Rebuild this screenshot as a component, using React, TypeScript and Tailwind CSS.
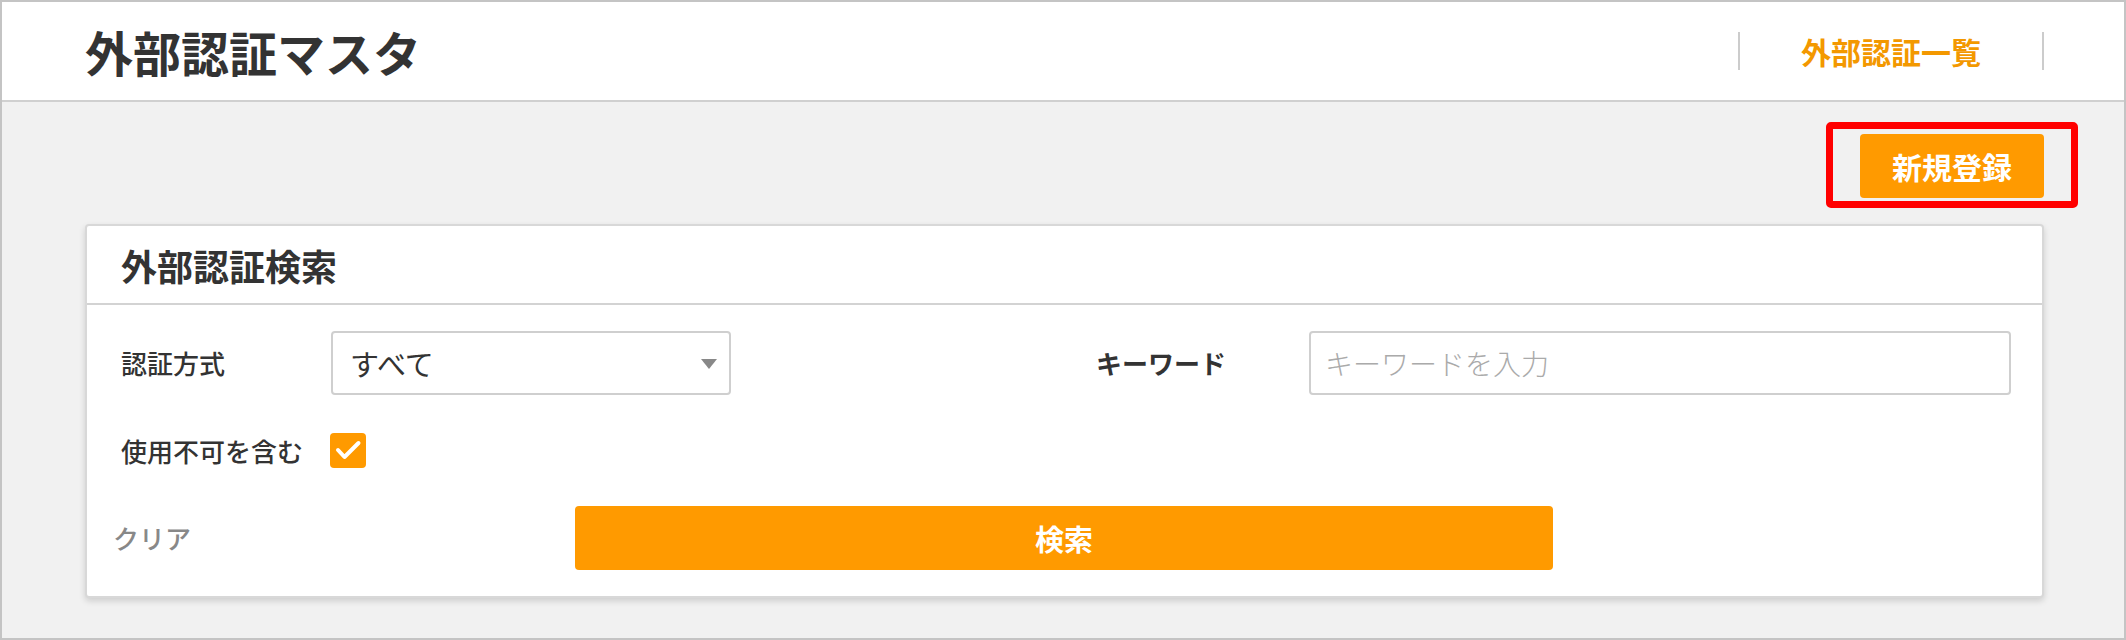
const font = "font-['Noto_Sans_CJK_JP','Noto_Sans',sans-serif]";

function CheckBox() {
  return (
    <span className="flex h-[35px] w-[36px] items-center justify-center rounded-[4px] bg-[#ff9a00]">
      <svg width="36" height="35" viewBox="0 0 36 35" fill="none">
        <path d="M8 17l6.5 7L28.5 10" stroke="#fff" strokeWidth="4" strokeLinecap="round" strokeLinejoin="round" />
      </svg>
    </span>
  );
}

export default function App() {
  return (
    <div className={`${font} flex h-[640px] w-[2126px] flex-col border-2 border-[#c4c4c4] bg-[#f1f1f1] text-[#333]`}>
      <header className="flex h-[100px] shrink-0 items-center justify-between border-b-2 border-[#d0d0d0] bg-white pl-[83px] pr-[80px]">
        <h1 className="text-[48px] font-bold leading-none">外部認証マスタ</h1>
        <nav className="flex h-[38px] w-[306px] items-center justify-center border-x-2 border-[#cccccc] text-[30px] font-bold leading-none text-[#f39800]">
          外部認証一覧
        </nav>
      </header>

      <main className="pl-[83px] pr-[80px]">
        <div className="mt-[32px] flex justify-end">
          <div className="relative">
            <button className="flex h-[64px] w-[184px] items-center justify-center rounded-[4px] bg-[#ff9a00] text-[30px] font-bold leading-none text-white">
              新規登録
            </button>
            {/* red annotation frame drawn over the button */}
            <span className="pointer-events-none absolute -bottom-[10px] -left-[34px] -right-[34px] -top-[12px] rounded-[5px] border-[7px] border-[#ff0000]" />
          </div>
        </div>

        <section className="mt-[26px] rounded-[4px] border-2 border-[#d8d8d8] bg-white shadow-[0_3px_6px_rgba(0,0,0,0.15)]">
          <div className="flex h-[79px] items-center border-b-2 border-[#d3d3d3] pl-[34px]">
            <h2 className="text-[36px] font-bold leading-none">外部認証検索</h2>
          </div>

          <div className="flex flex-col gap-[38px] pb-[26px] pl-[34px] pr-[31px] pt-[26px]">
            <div className="flex items-center">
              <label className="w-[210px] text-[26px] font-medium leading-none">認証方式</label>
              <div className="relative flex h-[64px] w-[400px] items-center rounded-[4px] border-2 border-[#cfcfcf] pl-[17px]">
                <span className="text-[29px] leading-none">すべて</span>
                <svg className="absolute right-[12px] top-[26px]" width="16" height="10" viewBox="0 0 16 10">
                  <path d="M0 0h16L8 10z" fill="#888" />
                </svg>
              </div>
              <label className="ml-[365px] w-[213px] text-[26px] font-bold leading-none">キーワード</label>
              <input
                placeholder="キーワードを入力"
                className="h-[64px] flex-1 rounded-[4px] border-2 border-[#cfcfcf] pl-[14px] text-[28px] font-light outline-none placeholder:text-[#aaaaaa]"
              />
            </div>

            <div className="flex items-center">
              <label className="w-[209px] text-[26px] font-medium leading-none">使用不可を含む</label>
              <CheckBox />
            </div>

            <div className="flex items-center">
              <button className="-ml-[8px] w-[462px] text-left text-[26px] font-medium leading-none text-[#888]">クリア</button>
              <button className="flex h-[64px] w-[978px] items-center justify-center rounded-[4px] bg-[#ff9a00] text-[29px] font-bold leading-none text-white">
                検索
              </button>
            </div>
          </div>
        </section>
      </main>
    </div>
  );
}
